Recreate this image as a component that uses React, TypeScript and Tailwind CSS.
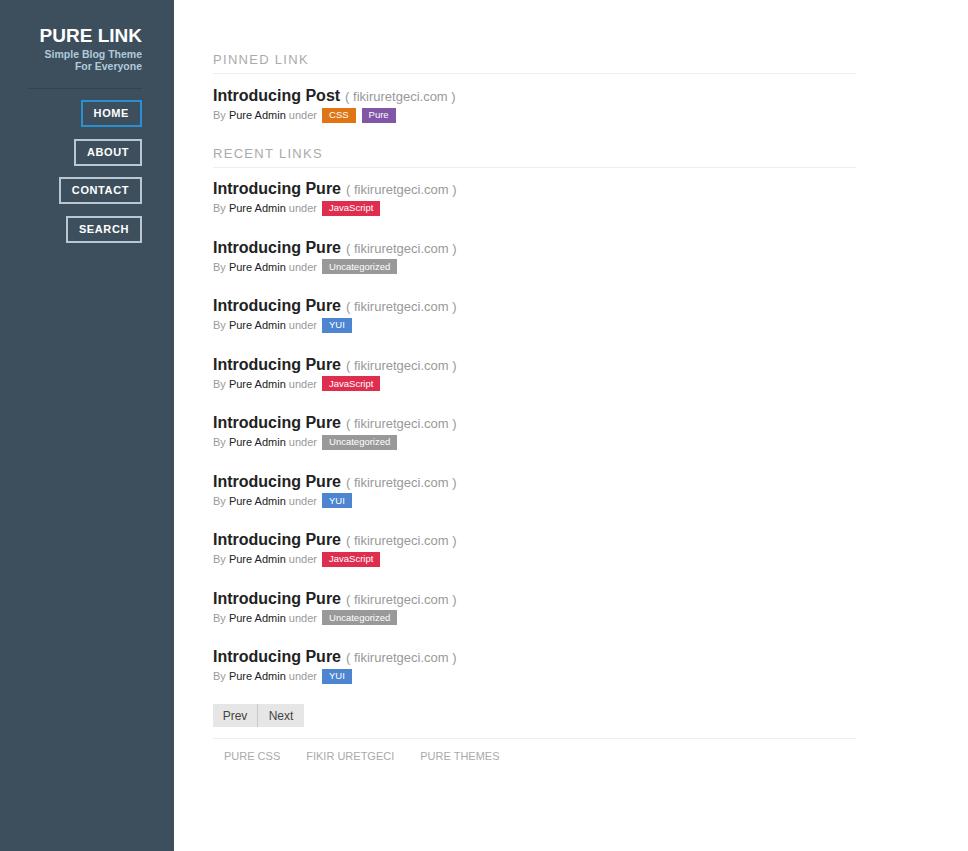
import React from "react";

const tagColors: Record<string, string> = {
  CSS: "bg-[#df7514]",
  Pure: "bg-[#8156a7]",
  JavaScript: "bg-[#df2d4f]",
  Uncategorized: "bg-[#999999]",
  YUI: "bg-[#4d85d1]",
};

const recent = [
  "JavaScript",
  "Uncategorized",
  "YUI",
  "JavaScript",
  "Uncategorized",
  "YUI",
  "JavaScript",
  "Uncategorized",
  "YUI",
];

function Post({ title, tags }: { title: string; tags: string[] }) {
  return (
    <div>
      <h2 className="h-[20px] flex items-baseline text-[16px] leading-[20px] font-bold text-[#222]">
        {title}
        <span className="ml-[5px] text-[13px] leading-[20px] font-normal text-[#999]">( fikiruretgeci.com )</span>
      </h2>
      <p className="mt-[1px] h-[16px] flex items-center text-[11px] leading-[16px] text-[#999]">
        By&nbsp;<span className="text-[#222]">Pure Admin</span>&nbsp;under&nbsp;
        {tags.map((t) => (
          <span
            key={t}
            className={`${tagColors[t]} ml-[2px] mr-[4px] h-[15px] px-[7px] flex items-center text-[9.5px] text-white`}
          >
            {t}
          </span>
        ))}
      </p>
    </div>
  );
}

function Subhead({ children }: { children: React.ReactNode }) {
  return (
    <h3 className="pt-[5px] pb-[6px] text-[13px] leading-[15px] tracking-[1.3px] uppercase text-[#aaa] border-b border-[#eee]">
      {children}
    </h3>
  );
}

export default function App() {
  const nav = [
    { label: "Home", active: true },
    { label: "About" },
    { label: "Contact" },
    { label: "Search" },
  ];

  return (
    <div className="flex min-h-[851px] font-['Liberation_Sans',Arial,sans-serif]">
      {/* Sidebar */}
      <aside className="w-[174px] shrink-0 bg-[#3d4f5d] pl-[28px] pr-[32px] pt-[25px]">
        <div className="text-right">
          <h1 className="text-[19px] leading-[22px] font-bold text-white">PURE LINK</h1>
          <p className="mt-[1px] text-[10.5px] leading-[12px] font-bold text-[#b0cadb]">
            Simple Blog Theme
            <br />
            For Everyone
          </p>
        </div>
        <div className="mt-[16px] border-t border-[#34444f]" />
        <nav className="mt-[11px] flex flex-col items-end gap-[11.5px]">
          {nav.map((n) => (
            <a
              key={n.label}
              href="#"
              className={`h-[27px] px-[11px] flex items-center border-2 text-[11px] font-bold tracking-[0.6px] uppercase text-white ${
                n.active ? "border-[#2b8fd4]" : "border-[#b8c7d2]"
              }`}
            >
              {n.label}
            </a>
          ))}
        </nav>
      </aside>

      {/* Content */}
      <main className="flex-1 pl-[39px] pt-[47px]">
        <div className="w-[643px]">
          <Subhead>Pinned Link</Subhead>
          <div className="mt-[12px]">
            <Post title="Introducing Post" tags={["CSS", "Pure"]} />
          </div>

          <div className="mt-[18px]">
            <Subhead>Recent Links</Subhead>
          </div>
          <div className="mt-[11px] flex flex-col gap-[21.5px]">
            {recent.map((t, i) => (
              <Post key={i} title="Introducing Pure" tags={[t]} />
            ))}
          </div>

          <div className="mt-[20px] flex">
            <button className="h-[23px] w-[45px] bg-[#e6e6e6] text-[12px] text-[#444] border-r border-[#c9c9c9]">
              Prev
            </button>
            <button className="h-[23px] w-[46px] bg-[#e6e6e6] text-[12px] text-[#444]">Next</button>
          </div>

          <footer className="mt-[11px] border-t border-[#eee] pt-[10px] flex gap-[4px]">
            {["Pure CSS", "Fikir Uretgeci", "Pure Themes"].map((l) => (
              <a key={l} href="#" className="px-[11px] text-[11px] leading-[14px] uppercase text-[#aaa]">
                {l}
              </a>
            ))}
          </footer>
        </div>
      </main>
    </div>
  );
}
